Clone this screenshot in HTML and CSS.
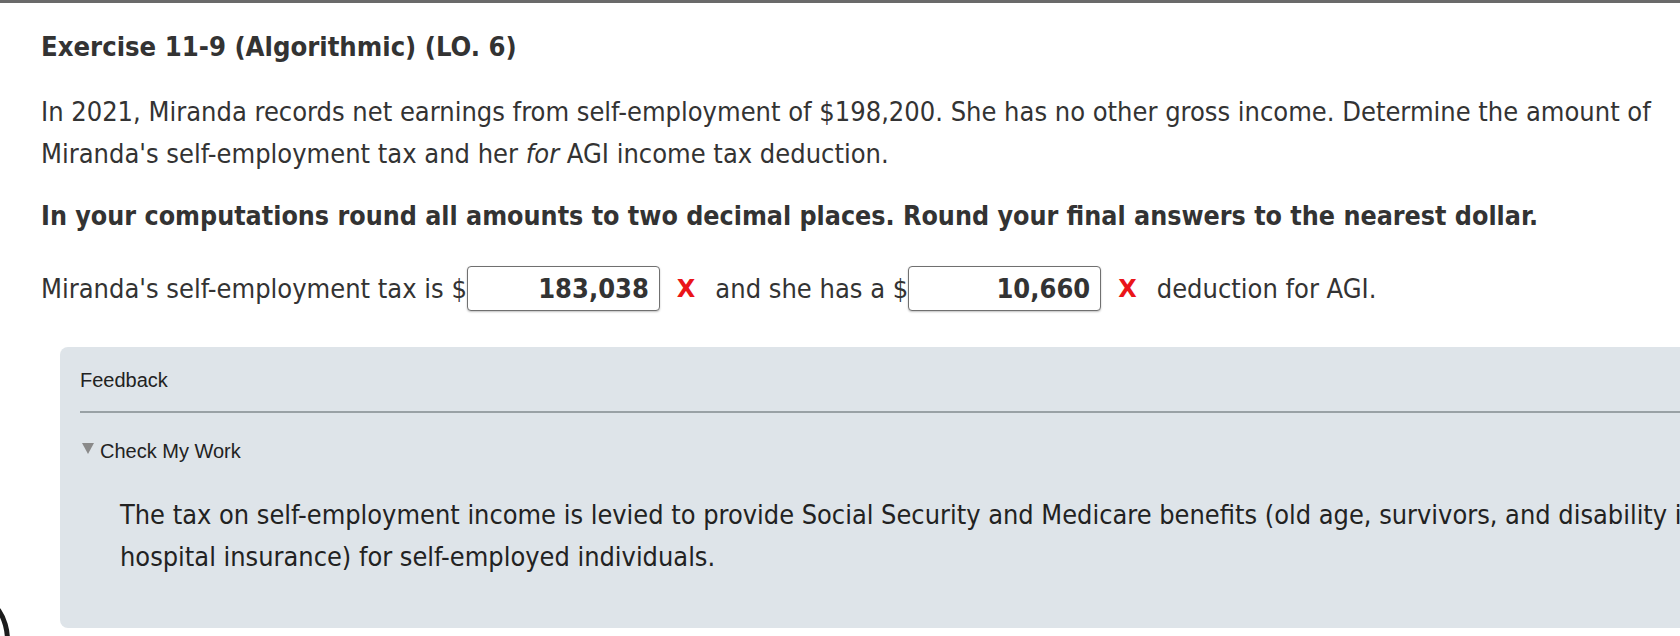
FILE: index.html
```html
<!DOCTYPE html>
<html lang="en">
<head>
<meta charset="utf-8">
<title>Exercise 11-9</title>
<link rel="stylesheet" href="styles.css">
</head>
<body>
<div class="topbar"></div>
<main class="page">
  <h1 class="title">Exercise 11-9 (Algorithmic) (LO. 6)</h1>
  <p class="para">In 2021, Miranda records net earnings from self-employment of $198,200. She has no other gross income. Determine the amount of Miranda's self-employment tax and her <em>for</em> AGI income tax deduction.</p>
  <p class="instr">In your computations round all amounts to two decimal places. Round your final answers to the nearest dollar.</p>
  <div class="answer-row">
    <span>Miranda's self-employment tax is $</span>
    <span class="box">183,038</span>
    <span class="wrong">X</span>
    <span>and she has a $</span>
    <span class="box">10,660</span>
    <span class="wrong">X</span>
    <span>deduction for AGI.</span>
  </div>
  <section class="feedback">
    <div class="fb-head">Feedback</div>
    <div class="fb-rule"></div>
    <div class="fb-toggle"><span class="tri"></span>Check My Work</div>
    <p class="fb-text">The tax on self-employment income is levied to provide Social Security and Medicare benefits (old age, survivors, and disability insurance and hospital insurance) for self-employed individuals.</p>
  </section>
</main>
<div class="corner-arc"></div>
</body>
</html>
```
FILE: styles.css
```css
html, body {
  margin: 0;
  padding: 0;
  background: #ffffff;
  overflow: hidden;
  width: 1680px;
  height: 636px;
}
body {
  position: relative;
  font-family: "DejaVu Sans Condensed", "DejaVu Sans", Verdana, sans-serif;
  font-stretch: condensed;
  color: #333333;
}
.topbar {
  height: 3px;
  background: #6a6a6a;
}
.page {
  width: 1720px;
  padding-left: 41px;
}
.title {
  margin: 0;
  padding-top: 28px;
  font-size: 27.2px;
  line-height: 32px;
  font-weight: bold;
}
.para {
  margin: 0;
  padding-top: 28px;
  font-size: 27px;
  line-height: 42px;
}
.para em {
  font-style: italic;
}
.instr {
  margin: 0;
  padding-top: 20px;
  font-size: 26.6px;
  line-height: 42px;
  font-weight: bold;
}
.answer-row {
  display: flex;
  align-items: center;
  margin-top: 29px;
  height: 45px;
  font-size: 27px;
  white-space: nowrap;
}
.box {
  box-sizing: border-box;
  width: 193px;
  height: 45px;
  border: 1px solid #707070;
  border-radius: 4px;
  box-shadow: 0 1px 2px rgba(0,0,0,0.25);
  text-align: right;
  padding-right: 10px;
  font-weight: bold;
  line-height: 43px;
  background: #fff;
}
.wrong {
  font-family: "DejaVu Sans", sans-serif;
  font-stretch: normal;
  font-weight: bold;
  color: #ea1519;
  font-size: 24px;
  margin: 0 20px 0 17px;
}
.feedback {
  margin-top: 36px;
  margin-left: 19px;
  width: 1850px;
  height: 281px;
  box-sizing: border-box;
  background: #dee4e9;
  border-radius: 8px;
  padding: 21px 0 0 20px;
}
.fb-head {
  font-family: "Liberation Sans", Arial, sans-serif;
  font-stretch: normal;
  font-size: 20px;
  line-height: 24px;
  color: #222;
}
.fb-rule {
  margin-top: 19px;
  height: 2px;
  background: #99a1a5;
}
.fb-toggle {
  display: flex;
  align-items: center;
  margin-top: 26px;
  font-family: "Liberation Sans", Arial, sans-serif;
  font-stretch: normal;
  font-size: 20px;
  line-height: 24px;
  color: #222;
}
.tri {
  width: 0;
  height: 0;
  margin-left: 2px;
  margin-right: 6px;
  margin-top: -6px;
  border-left: 6px solid transparent;
  border-right: 6px solid transparent;
  border-top: 11px solid #8a8a8a;
}
.fb-text {
  margin: 0;
  padding-top: 31px;
  padding-left: 40px;
  font-size: 26.9px;
  line-height: 42px;
  color: #222;
}
.corner-arc {
  position: absolute;
  left: -52px;
  top: 596px;
  width: 52px;
  height: 80px;
  border: 5px solid #1c1c1c;
  border-radius: 50%;
}
```
